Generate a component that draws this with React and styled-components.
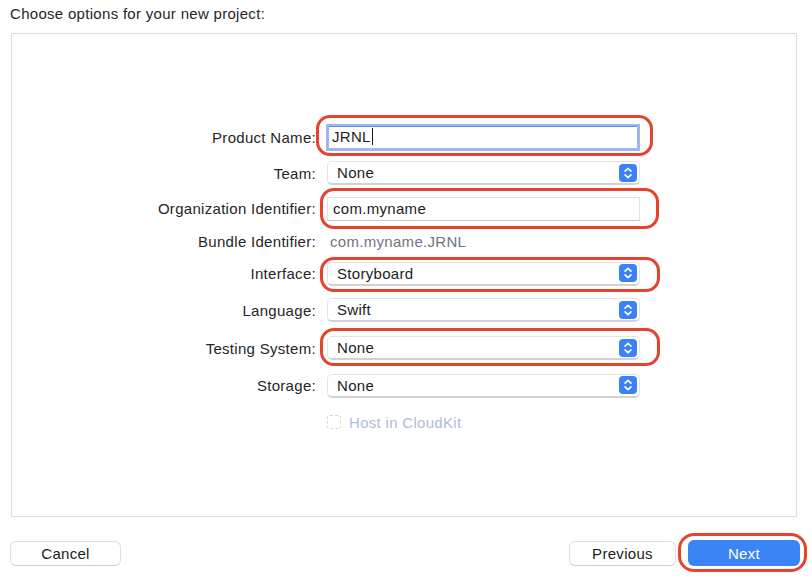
import React from 'react';
import styled, { createGlobalStyle, css } from 'styled-components';

const GlobalStyle = createGlobalStyle`
  body {
    margin: 0;
    background: #ffffff;
    font-family: "Liberation Sans", Arial, sans-serif;
    letter-spacing: 0.3px;
    color: #222222;
  }
`;

const red = '#e4432d';

const Page = styled.div`
  width: 812px;
  height: 581px;
  padding-left: 10px;
  box-sizing: border-box;
  overflow: hidden;
`;

const Title = styled.div`
  height: 33px;
  padding-top: 6px;
  box-sizing: border-box;
  font-size: 15px;
  line-height: 16px;
  color: #262626;
`;

const Panel = styled.div`
  margin-left: 1px;
  width: 786px;
  height: 484px;
  box-sizing: border-box;
  border: 1px solid #dedede;
  padding-top: 85px;
`;

const Row = styled.div`
  display: grid;
  grid-template-columns: 304px 314px;
  column-gap: 10px;
  align-items: center;
  height: ${(p) => p.h}px;
`;

const Label = styled.div`
  text-align: right;
  font-size: 15px;
  color: #262626;
`;

const Field = styled.div`
  position: relative;
  margin-left: ${(p) => p.shift || 0}px;
`;

const Highlight = styled.div`
  position: absolute;
  top: ${(p) => p.t}px;
  bottom: ${(p) => p.b}px;
  left: ${(p) => p.l}px;
  right: ${(p) => p.r}px;
  border: 3px solid ${red};
  border-radius: 14px;
  pointer-events: none;
`;

const TextBox = styled.div`
  height: 24px;
  box-sizing: border-box;
  display: flex;
  align-items: center;
  padding-left: 5px;
  font-size: 15px;
  color: #1c1c1c;
  background: #fff;
  border: 1px solid #e2e2e2;
  border-bottom-color: #c9c9c9;
  ${(p) =>
    p.focused &&
    css`
      height: 27px;
      border: 3px solid #9fb6e8;
      border-top-width: 2px;
      box-shadow: inset 0 1px 0 #5f8de6;
      padding-left: 3px;
    `}
`;

const Caret = styled.span`
  display: inline-block;
  width: 1px;
  height: 17px;
  margin-left: 1px;
  background: #1a1a1a;
`;

const Select = styled.div`
  height: 24px;
  box-sizing: border-box;
  display: flex;
  align-items: center;
  justify-content: space-between;
  padding: 0 2px 0 9px;
  font-size: 15px;
  color: #1c1c1c;
  background: #fff;
  border: 1px solid #e4e4e4;
  border-bottom: 2px solid #d2d2d2;
  border-radius: 5px;
`;

const Stepper = styled.span`
  width: 18px;
  height: 18px;
  border-radius: 4px;
  background: #3b82f6;
  display: flex;
  align-items: center;
  justify-content: center;
`;

const StaticValue = styled.div`
  font-size: 15px;
  color: #6f7580;
  padding-left: 4px;
`;

const CheckRow = styled.label`
  display: flex;
  align-items: center;
  gap: 8px;
  margin-left: 1px;
  font-size: 15px;
  color: #aebcd9;
`;

const Box = styled.span`
  width: 14px;
  height: 14px;
  box-sizing: border-box;
  border: 1px dashed #d6d6d6;
  border-radius: 3px;
`;

const Footer = styled.div`
  display: flex;
  align-items: center;
  width: 790px;
  margin-top: 23px;
`;

const Button = styled.div`
  position: relative;
  width: ${(p) => p.w}px;
  height: 25px;
  box-sizing: border-box;
  display: flex;
  align-items: center;
  justify-content: center;
  font-size: 15px;
  border-radius: 6px;
  ${(p) =>
    p.primary
      ? css`
          background: #3b84f5;
          color: #fff;
          height: 26px;
          margin-left: 12px;
        `
      : css`
          background: #fff;
          color: #1c1c1c;
          border: 1px solid #e0e0e0;
          border-bottom-color: #cfcfcf;
        `}
`;

const Spacer = styled.div`
  flex: 1;
`;

const ButtonRing = styled.div`
  position: absolute;
  top: -7px;
  bottom: -6px;
  left: -10px;
  right: -7px;
  border: 3px solid ${red};
  border-radius: 16px;
`;

function Chevrons() {
  return (
    <svg width="10" height="14" viewBox="0 0 10 14" fill="none">
      <path d="M2 5.2 L5 2.4 L8 5.2" stroke="#fff" strokeWidth="1.6" strokeLinecap="round" strokeLinejoin="round" />
      <path d="M2 8.8 L5 11.6 L8 8.8" stroke="#fff" strokeWidth="1.6" strokeLinecap="round" strokeLinejoin="round" />
    </svg>
  );
}

function PopUp({ value }) {
  return (
    <Select>
      <span>{value}</span>
      <Stepper>
        <Chevrons />
      </Stepper>
    </Select>
  );
}

export default function App() {
  return (
    <>
      <GlobalStyle />
      <Page>
        <Title>Choose options for your new project:</Title>
        <Panel>
          <Row h={36}>
            <Label>Product Name:</Label>
            <Field>
              <TextBox focused>
                JRNL
                <Caret />
              </TextBox>
              <Highlight t={-9} b={-5} l={-10} r={-13} />
            </Field>
          </Row>
          <Row h={36.5}>
            <Label>Team:</Label>
            <Field shift={1}>
              <PopUp value="None" />
            </Field>
          </Row>
          <Row h={34}>
            <Label>Organization Identifier:</Label>
            <Field shift={1}>
              <TextBox>com.myname</TextBox>
              <Highlight t={-9} b={-8} l={-7} r={-19} />
            </Field>
          </Row>
          <Row h={31}>
            <Label>Bundle Identifier:</Label>
            <StaticValue>com.myname.JRNL</StaticValue>
          </Row>
          <Row h={34.5}>
            <Label>Interface:</Label>
            <Field shift={1}>
              <PopUp value="Storyboard" />
              <Highlight t={-5} b={-6} l={-7} r={-20} />
            </Field>
          </Row>
          <Row h={38}>
            <Label>Language:</Label>
            <Field shift={1}>
              <PopUp value="Swift" />
            </Field>
          </Row>
          <Row h={38}>
            <Label>Testing System:</Label>
            <Field shift={1}>
              <PopUp value="None" />
              <Highlight t={-8} b={-6} l={-7} r={-20} />
            </Field>
          </Row>
          <Row h={37}>
            <Label>Storage:</Label>
            <Field shift={1}>
              <PopUp value="None" />
            </Field>
          </Row>
          <Row h={36}>
            <span />
            <CheckRow>
              <Box />
              Host in CloudKit
            </CheckRow>
          </Row>
        </Panel>
        <Footer>
          <Button w={111}>Cancel</Button>
          <Spacer />
          <Button w={107}>Previous</Button>
          <Button w={112} primary>
            Next
            <ButtonRing />
          </Button>
        </Footer>
      </Page>
    </>
  );
}
